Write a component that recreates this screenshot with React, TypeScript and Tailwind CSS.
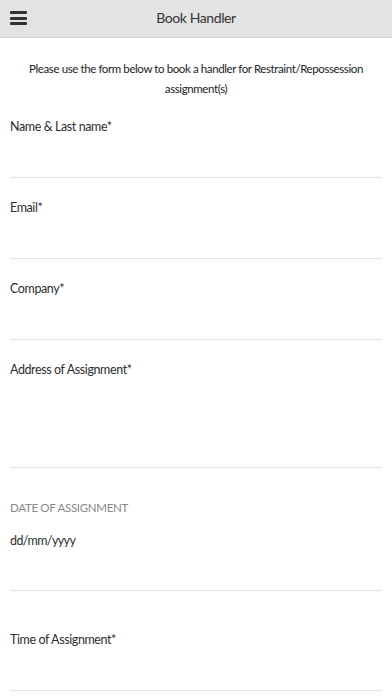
export default function App() {
  return (
    <div className="min-h-[696px] bg-white font-['Lato','Noto_Sans',sans-serif] text-[#2e2e2e]">
      {/* Header */}
      <div className="h-[38px] flex items-center relative bg-[#e3e3e3] border-b border-[#cdcdcd]">
        <button type="button" className="absolute left-[10px] top-[11px] flex flex-col gap-[2.5px]" aria-label="Menu">
          <span className="block w-[17px] h-[3px] rounded-[1px] bg-[#333]" />
          <span className="block w-[17px] h-[3px] rounded-[1px] bg-[#333]" />
          <span className="block w-[17px] h-[3px] rounded-[1px] bg-[#333]" />
        </button>
        <div className="flex-1 pb-[3px] text-center text-[14px] tracking-[-0.4px] text-[#333]">Book Handler</div>
      </div>

      <div className="px-[10px]">
        {/* Intro */}
        <p className="mt-[21px] text-center text-[11.5px] tracking-[-0.4px] leading-[20px] text-[#222]">
          Please use the form below to book a handler for Restraint/Repossession assignment(s)
        </p>

        {/* Name */}
        <div className="mt-[20px]">
          <div className="text-[12.5px] tracking-[-0.4px] leading-[16px]">Name &amp; Last name*</div>
          <div className="h-[43px] border-b border-[#e2e2e2]" />
        </div>

        {/* Email */}
        <div className="mt-[22px]">
          <div className="text-[12.5px] tracking-[-0.4px] leading-[16px]">Email*</div>
          <div className="h-[43px] border-b border-[#e2e2e2]" />
        </div>

        {/* Company */}
        <div className="mt-[22px]">
          <div className="text-[12.5px] tracking-[-0.4px] leading-[16px]">Company*</div>
          <div className="h-[43px] border-b border-[#e2e2e2]" />
        </div>

        {/* Address */}
        <div className="mt-[22px]">
          <div className="text-[12.5px] tracking-[-0.4px] leading-[16px]">Address of Assignment*</div>
          <div className="h-[90px] border-b border-[#e2e2e2]" />
        </div>

        {/* Date */}
        <div className="mt-[32px]">
          <div className="text-[11.5px] tracking-[-0.3px] leading-[16px] uppercase text-[#888]">Date of Assignment</div>
          <div className="mt-[17px] text-[12.5px] tracking-[-0.6px] leading-[16px]">dd/mm/yyyy</div>
          <div className="h-[42px] border-b border-[#e2e2e2]" />
        </div>

        {/* Time */}
        <div className="mt-[41px]">
          <div className="text-[12.5px] tracking-[-0.4px] leading-[16px]">Time of Assignment*</div>
          <div className="h-[43px] border-b border-[#e2e2e2]" />
        </div>
      </div>
    </div>
  );
}
